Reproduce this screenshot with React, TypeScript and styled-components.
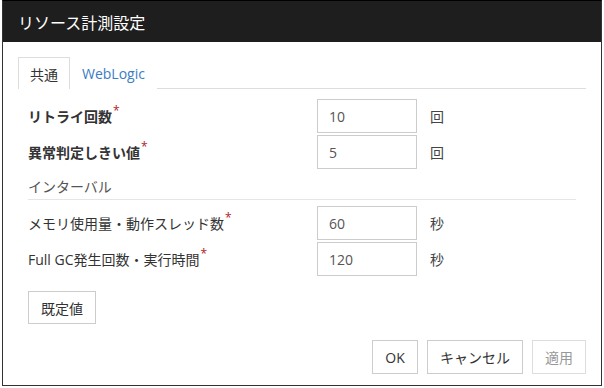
import React from 'react';
import styled, {createGlobalStyle} from 'styled-components';

const GlobalStyle = createGlobalStyle`
  html, body {
    margin: 0;
    padding: 0;
    background: #ffffff;
  }
  body {
    font-family: "Open Sans", "Noto Sans CJK JP", sans-serif;
    color: #333333;
  }
`

const Dialog = styled.div`
    box-sizing: border-box;
    margin-left: 2px;
    width: 600px;
    height: 386px;
    border: 1px solid #333333;
    border-top: 1px solid #000000;
    background: #ffffff;
    display: flex;
    flex-direction: column;
`

const TitleBar = styled.div`
    height: 41px;
    background: #1e1e1e;
    color: #ffffff;
    font-size: 16px;
    display: flex;
    align-items: center;
    padding-left: 15px;
`

const Body = styled.div`
    padding: 15px 15px 0 15px;
    display: flex;
    flex-direction: column;
`

const TabBar = styled.div`
    display: flex;
    height: 31px;
    border-bottom: 1px solid #dddddd;
`

const Tab = styled.div<{ $active?: boolean }>`
    box-sizing: border-box;
    height: 32px;
    padding: 0 11px;
    display: flex;
    align-items: center;
    font-size: 14px;
    color: ${p => p.$active ? '#333333' : '#3a7cc6'};
    background: #ffffff;
    border: 1px solid ${p => p.$active ? '#dddddd' : 'transparent'};
    border-bottom: none;
`

const Form = styled.div`
    padding: 10px 10px 0 10px;
    display: flex;
    flex-direction: column;
    gap: 2px;
`

const Row = styled.div`
    display: grid;
    grid-template-columns: 289px 100px auto;
    align-items: center;
    height: 34px;
`

const Label = styled.div<{ $bold?: boolean }>`
    font-size: 14px;
    font-weight: ${p => p.$bold ? 700 : 400};
    color: #333333;
    white-space: nowrap;
`

const Required = styled.sup`
    color: #b22222;
    font-size: 12px;
    font-weight: 400;
    vertical-align: top;
    position: relative;
    top: -4px;
    margin-left: 1px;
`

const Field = styled.div`
    box-sizing: border-box;
    height: 34px;
    border: 1px solid #cccccc;
    padding: 0 11px;
    display: flex;
    align-items: center;
    font-size: 14px;
    color: #555555;
`

const Unit = styled.div`
    padding-left: 13px;
    font-size: 14px;
    color: #444444;
`

const SectionHeader = styled.div`
    margin: 6px 0 4px 0;
    line-height: 20px;
    padding-bottom: 2px;
    border-bottom: 1px solid #e5e5e5;
    font-size: 14px;
    color: #555555;
`

const DefaultButton = styled.button`
    align-self: flex-start;
    margin: 15px 0 0 10px;
    box-sizing: border-box;
    height: 33px;
    width: 68px;
    border: 1px solid #cccccc;
    background: #ffffff;
    font-family: inherit;
    font-size: 14px;
    color: #333333;
    padding: 0;
`

const Footer = styled.div`
    display: flex;
    justify-content: flex-end;
    gap: 9px;
    margin-top: 16px;
`

const FooterButton = styled.button<{ $width: number }>`
    box-sizing: border-box;
    height: 34px;
    width: ${p => p.$width}px;
    border: 1px solid ${p => p.disabled ? '#dddddd' : '#cccccc'};
    background: #ffffff;
    font-family: inherit;
    font-size: 14px;
    color: ${p => p.disabled ? '#999999' : '#333333'};
    padding: 0;
`

const fields = [
  {label: 'リトライ回数', value: '10', unit: '回', bold: true},
  {label: '異常判定しきい値', value: '5', unit: '回', bold: true},
];

const intervalFields = [
  {label: 'メモリ使用量・動作スレッド数', value: '60', unit: '秒'},
  {label: 'Full GC発生回数・実行時間', value: '120', unit: '秒'},
];

export default function App(): React.ReactElement {
  return (
    <>
      <GlobalStyle/>
      <Dialog>
        <TitleBar>リソース計測設定</TitleBar>
        <Body>
          <TabBar>
            <Tab $active>共通</Tab>
            <Tab>WebLogic</Tab>
          </TabBar>
          <Form>
            {fields.map(f => (
              <Row key={f.label}>
                <Label $bold={f.bold}>{f.label}<Required>*</Required></Label>
                <Field>{f.value}</Field>
                <Unit>{f.unit}</Unit>
              </Row>
            ))}
            <SectionHeader>インターバル</SectionHeader>
            {intervalFields.map(f => (
              <Row key={f.label}>
                <Label>{f.label}<Required>*</Required></Label>
                <Field>{f.value}</Field>
                <Unit>{f.unit}</Unit>
              </Row>
            ))}
          </Form>
          <DefaultButton>既定値</DefaultButton>
          <Footer>
            <FooterButton $width={46}>OK</FooterButton>
            <FooterButton $width={96}>キャンセル</FooterButton>
            <FooterButton $width={54} disabled>適用</FooterButton>
          </Footer>
        </Body>
      </Dialog>
    </>
  );
}
